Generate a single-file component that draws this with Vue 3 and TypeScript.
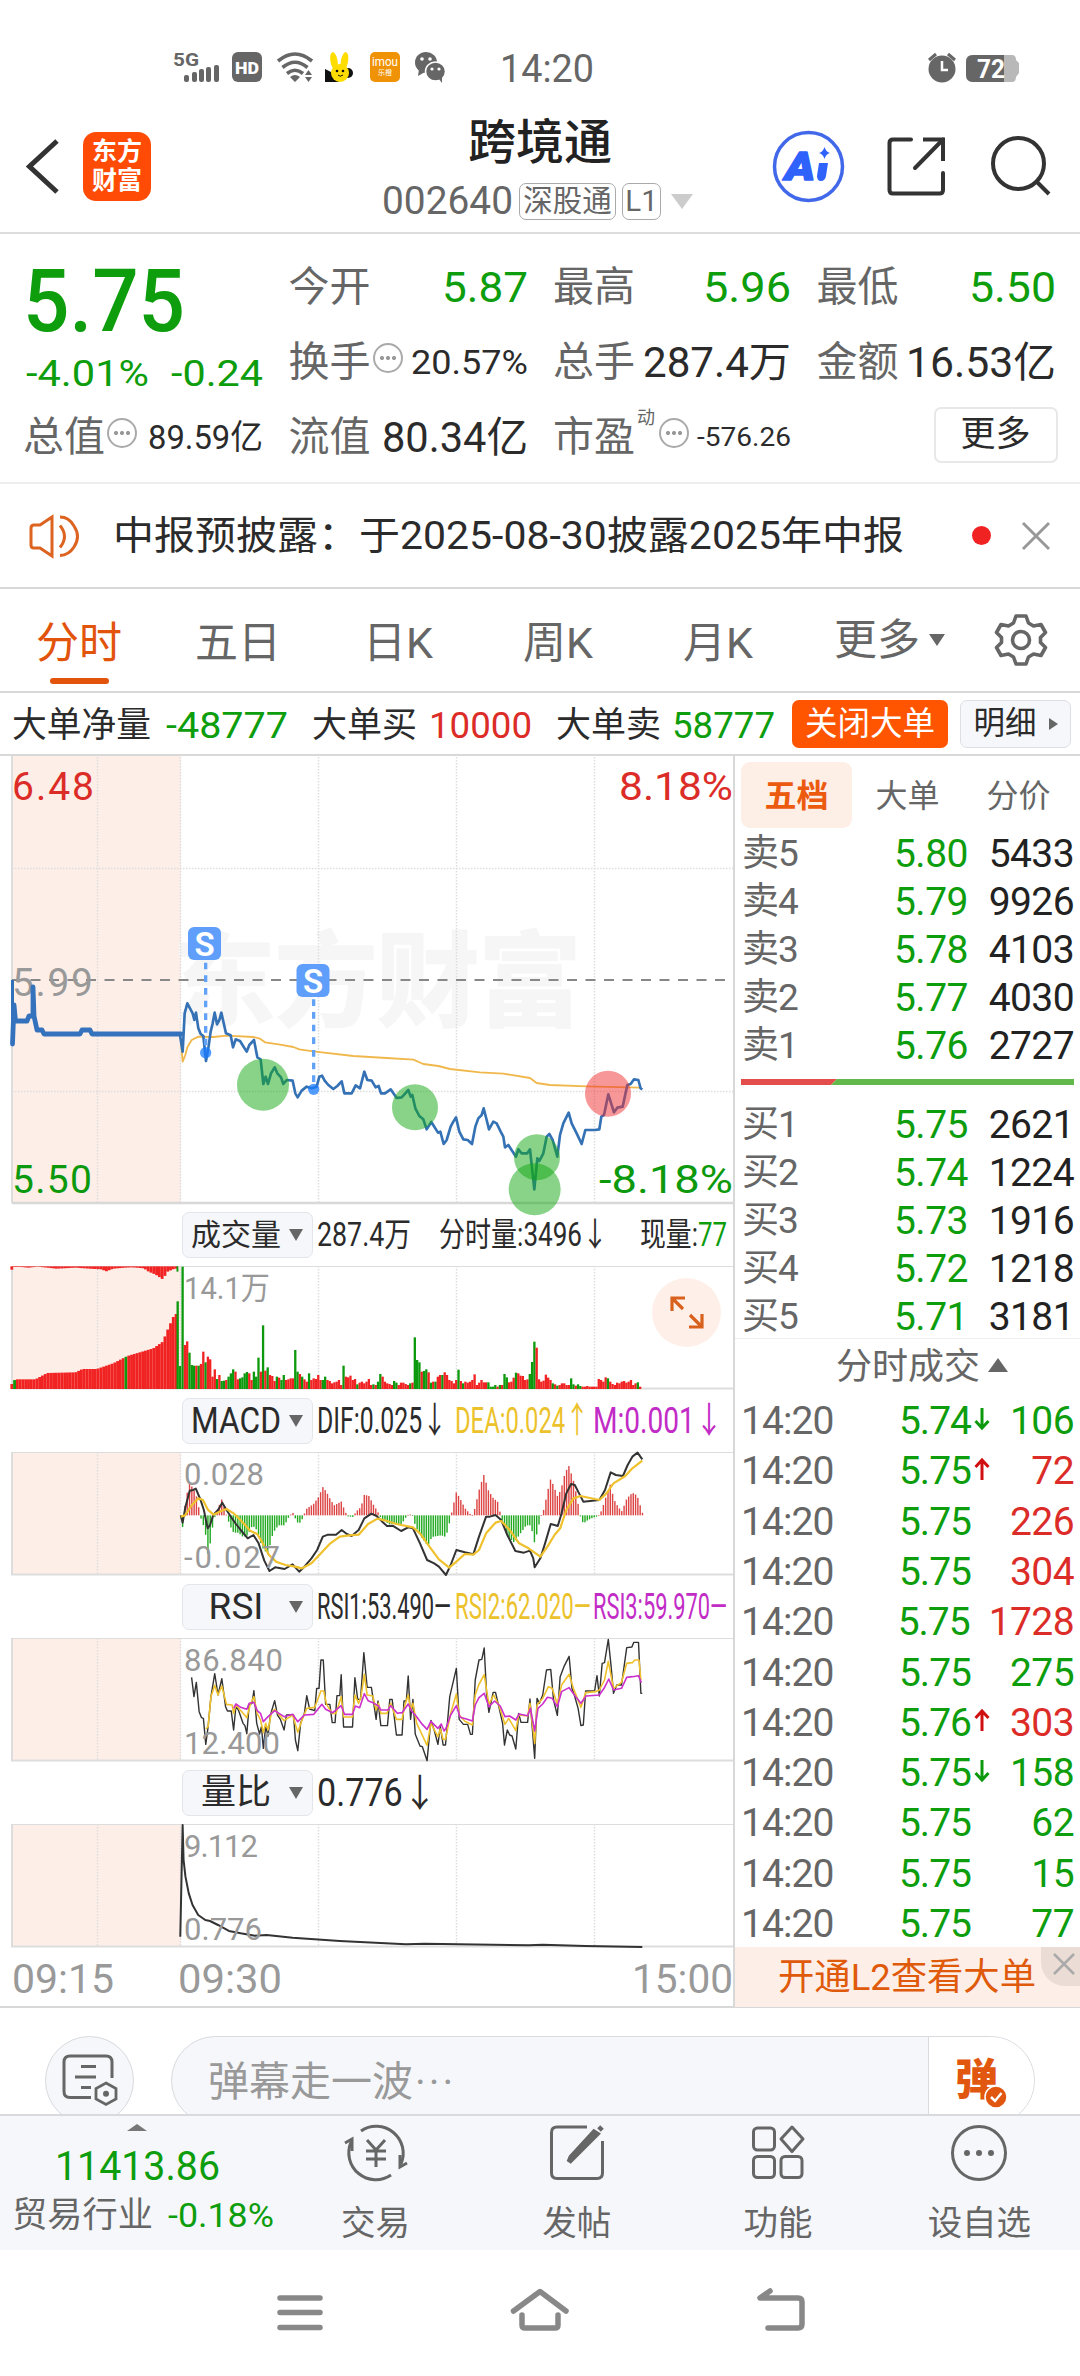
<script setup lang="ts">
import type { Directive } from 'vue'

// Squeezes or stretches a label horizontally so it occupies the given width.
const vFit: Directive<HTMLElement, number> = {
  mounted(el, { value }) {
    const natural = el.getBoundingClientRect().width
    el.style.transform = `scaleX(${value / natural})`
    el.style.marginRight = `${value - natural}px`
  },
}

interface Level { name: string; price: string; vol: string }
const asks: Level[] = [
  { name: '卖5', price: '5.80', vol: '5433' },
  { name: '卖4', price: '5.79', vol: '9926' },
  { name: '卖3', price: '5.78', vol: '4103' },
  { name: '卖2', price: '5.77', vol: '4030' },
  { name: '卖1', price: '5.76', vol: '2727' },
]
const bids: Level[] = [
  { name: '买1', price: '5.75', vol: '2621' },
  { name: '买2', price: '5.74', vol: '1224' },
  { name: '买3', price: '5.73', vol: '1916' },
  { name: '买4', price: '5.72', vol: '1218' },
  { name: '买5', price: '5.71', vol: '3181' },
]

interface Tick { price: string; dir?: 'up' | 'down'; vol: string; tone: 'red' | 'green' }
const ticks: Tick[] = [
  { price: '5.74', dir: 'down', vol: '106', tone: 'green' },
  { price: '5.75', dir: 'up', vol: '72', tone: 'red' },
  { price: '5.75', vol: '226', tone: 'red' },
  { price: '5.75', vol: '304', tone: 'red' },
  { price: '5.75', vol: '1728', tone: 'red' },
  { price: '5.75', vol: '275', tone: 'green' },
  { price: '5.76', dir: 'up', vol: '303', tone: 'red' },
  { price: '5.75', dir: 'down', vol: '158', tone: 'green' },
  { price: '5.75', vol: '62', tone: 'green' },
  { price: '5.75', vol: '15', tone: 'green' },
  { price: '5.75', vol: '77', tone: 'green' },
]

const gridX = [97.5, 180.5, 318.5, 456.5, 594.5]

const price =
  '0,225 8,275 14,160 22,130 30,145 38,160 43,180 48,158 55,205 62,222 70,228 78,303 85,265 92,215 98,190 104,158 111,193 118,180 124,158 138,220 152,226 159,262 167,238 180,243 200,275 208,255 222,240 232,292 242,298 250,372 257,350 264,372 273,340 284,322 292,340 303,352 310,372 320,360 338,362 346,400 353,412 365,392 380,380 395,385 410,380 418,350 426,347 434,362 445,375 460,387 472,378 485,364 493,400 515,400 527,376 540,385 553,335 562,360 575,362 587,382 596,378 603,400 615,400 632,388 650,414 665,412 685,390 692,410 697,405 706,445 718,468 730,478 740,508 754,486 774,518 781,515 791,552 800,540 812,500 820,485 828,472 838,515 850,538 863,540 876,552 886,500 895,475 905,465 911,445 920,480 927,508 940,485 950,490 962,515 970,530 975,562 985,555 1008,590 1015,568 1025,580 1042,580 1050,568 1063,688 1072,595 1078,603 1090,580 1100,530 1108,522 1118,540 1132,590 1140,525 1150,490 1166,458 1175,490 1190,520 1205,552 1216,510 1245,510 1258,508 1264,470 1272,465 1285,403 1302,457 1312,443 1328,440 1342,375 1352,372 1362,358 1375,360 1382,385 1387,388'
const average =
  '2,235 8,305 16,285 22,262 35,240 55,230 100,231 140,227 220,231 240,236 255,247 300,254 340,261 358,268 400,274 520,288 620,294 700,299 730,312 775,318 810,327 900,337 970,341 1050,354 1070,369 1110,375 1220,379 1380,383'

const dif =
  '383,376 387,398 393,350 402,302 409,300 415,296 425,330 432,360 440,415 445,405 452,375 462,360 471,338 480,360 490,382 500,402 510,420 525,445 537,435 548,460 560,512 571,543 583,532 603,537 620,523 634,545 645,530 660,505 672,480 684,440 695,434 712,434 724,420 735,432 745,438 760,420 772,385 787,371 798,378 810,395 820,408 832,407 850,423 865,412 875,415 890,460 905,510 920,520 930,530 945,555 955,525 967,480 985,487 1003,493 1015,440 1030,380 1038,380 1050,375 1062,390 1075,435 1092,483 1110,488 1123,482 1130,505 1133,532 1145,505 1155,460 1167,402 1175,405 1182,408 1190,370 1200,310 1210,282 1218,285 1227,310 1236,335 1270,330 1282,300 1294,247 1305,255 1320,258 1330,225 1340,200 1351,188 1361,208'
const dea =
  '383,380 392,376 405,348 420,325 430,330 440,358 452,374 470,362 480,357 495,370 515,398 530,422 545,432 555,455 570,495 585,515 605,525 625,530 640,535 660,520 680,490 700,460 720,440 740,436 760,434 780,402 800,386 820,393 840,402 875,412 890,430 910,470 930,508 952,533 967,515 985,492 1003,494 1015,480 1030,430 1050,398 1062,393 1080,420 1100,460 1120,475 1145,500 1160,470 1175,435 1187,415 1200,360 1215,325 1230,318 1270,330 1285,310 1300,280 1325,258 1340,235 1361,212'

const rsi1 =
  '406,292 411,350 416,307 422,395 427,413 431,415 436,493 441,440 447,350 455,281 462,345 470,296 478,380 482,393 490,393 495,450 500,378 506,393 515,430 519,437 523,461 528,375 534,370 538,332 544,430 550,462 554,440 558,505 563,440 568,468 573,405 582,362 588,405 594,418 602,450 607,405 622,405 626,480 631,512 637,430 645,400 650,347 656,387 667,392 671,325 676,325 680,240 685,240 690,373 699,373 704,428 710,428 714,347 720,347 723,284 728,441 747,441 752,293 758,358 764,358 771,218 778,322 787,322 797,418 801,363 807,437 821,437 826,358 831,358 840,465 852,465 856,363 861,363 865,288 870,418 875,358 880,463 890,498 895,500 905,542 913,421 920,450 928,493 933,440 939,495 944,495 953,350 967,265 973,418 982,433 991,433 997,463 1001,463 1007,300 1015,240 1021,238 1026,204 1031,340 1036,397 1045,337 1050,337 1057,380 1065,430 1069,495 1075,450 1080,465 1085,468 1093,507 1099,400 1104,427 1118,427 1123,357 1133,535 1138,355 1143,370 1150,345 1158,270 1167,268 1173,360 1181,406 1187,290 1195,260 1206,229 1212,325 1217,345 1225,385 1231,437 1236,435 1241,333 1260,333 1265,287 1270,348 1276,250 1281,248 1289,178 1295,260 1300,340 1307,315 1317,315 1328,203 1339,201 1343,187 1353,187 1358,340 1361,340'
const rsi2 =
  '436,447 441,440 447,350 455,316 462,345 470,318 480,373 492,375 495,400 500,375 515,400 523,413 530,375 538,350 545,400 552,420 558,458 563,430 568,450 575,400 582,388 602,422 620,405 631,457 640,420 650,385 667,382 680,333 686,333 692,373 704,400 712,400 723,350 728,411 747,411 752,345 760,370 765,350 772,283 778,345 790,348 797,390 802,370 807,400 820,400 828,370 840,418 852,418 858,375 865,345 870,390 875,370 883,430 893,460 905,496 913,430 928,470 933,447 939,478 944,478 955,400 967,342 973,405 985,424 1001,435 1007,345 1015,313 1026,284 1036,373 1046,345 1057,375 1070,433 1078,415 1093,452 1099,405 1118,408 1123,370 1133,490 1138,375 1150,355 1162,320 1170,325 1181,373 1190,315 1206,283 1215,325 1231,382 1241,338 1262,335 1270,330 1281,300 1289,244 1300,325 1317,307 1328,250 1340,248 1345,240 1354,240 1358,300'
const rsi3 =
  '495,385 500,372 510,382 523,388 528,370 538,367 545,392 552,400 558,425 568,410 582,392 602,410 620,403 631,425 645,405 665,403 682,373 690,388 705,398 723,377 730,403 747,403 753,378 762,383 772,341 780,362 790,368 802,378 807,390 822,390 828,377 842,400 852,398 865,372 872,393 880,405 893,430 905,448 913,424 928,445 935,432 941,453 945,445 955,405 967,377 975,412 990,418 1001,423 1007,375 1015,353 1026,340 1036,380 1048,363 1060,378 1070,410 1080,408 1093,420 1100,402 1118,407 1124,385 1133,453 1140,385 1150,372 1160,352 1170,355 1181,380 1190,335 1206,323 1220,350 1231,370 1242,348 1270,345 1280,325 1290,297 1300,330 1317,325 1328,292 1340,290 1353,287 1359,308'
const ratio =
  '382,530 387,195 389,300 393,350 400,400 408,435 420,465 435,480 445,483 462,495 485,513 510,520 540,527 565,525 620,533 720,543 860,553 900,551 1120,556 1150,554 1240,558 1361,561'

function lerp(keys: number[][], x: number): number {
  for (let i = 1; i < keys.length; i++) {
    const [x0, y0] = keys[i - 1]
    const [x1, y1] = keys[i]
    if (x <= x1) return y0 + ((y1 - y0) * (x - x0)) / (x1 - x0)
  }
  return keys[keys.length - 1][1]
}

interface Bar { x: number; y: number; w: number; h: number; c: string }
const RED = '#f02222'
const GREEN = '#0d990d'
const STEP = 4.872

// Minute volume after the open: colour letter + bar height.
const volumes =
  'g367 r132 r143 g109 g72 g70 r70 g70 r75 r112 g80 r97 r89 r37 r59 g30 r42 g24 g25 r27 g37 g47 g59 r52 r29 g32 g35 g47 g51 r47 r27 g52 g37 g94 r52 g191 r55 g65 r42 r39 r24 g37 r34 g27 g42 r27 r29 r32 r32 g117 g52 r45 g37 r29 r22 g47 r27 r32 r30 r42 r27 g27 g37 r27 r24 r17 r20 r22 r27 r12 g70 r37 r35 r40 r27 r30 g14 r19 r22 r17 r22 r30 r12 g14 r12 g22 g45 r37 r22 r17 r15 r12 g24 g19 r12 r19 r19 r15 r12 g17 r19 g155 g87 g80 r52 g54 g59 r50 g19 r22 g22 r37 r42 g42 r50 r42 r27 r24 r17 r27 g58 r24 g17 r22 r19 r22 r27 r44 r12 r19 r27 r20 r20 g20 g7 g7 g12 r7 g12 r12 g45 g35 r20 r22 r34 g49 r47 r40 r39 r27 r29 g45 g81 g142 r124 r29 r22 r25 r43 r34 r27 g17 r14 g10 r12 r17 r17 r12 r12 g32 g14 r10 g14 g9 r7 r7 r9 r7 r7 r7 r7 r30 r27 r22 r35 g32 r22 r15 r12 r19 r17 r22 r24 r19 r22 r27 r12 r17 g20 r7'
const preTop = [[25, 552], [32, 538], [75, 538], [100, 519], [160, 517], [175, 507], [205, 507], [240, 490], [270, 468], [325, 445], [345, 425], [355, 390], [370, 342]]
const preHang = [[25, 209], [30, 201], [45, 201], [60, 203], [80, 200], [120, 206], [160, 203], [190, 206], [215, 208], [225, 214], [240, 206], [265, 203], [280, 202], [305, 205], [315, 215], [330, 224], [345, 238], [355, 215], [370, 206]]

const volumeBars: Bar[] = []
for (let x = 25; x < 374; x += 5.9) {
  const y = lerp(preTop, x)
  const odd = (x > 27 && x < 32) || (x > 266 && x < 272)
  volumeBars.push({ x: x - 3, y, w: 6, h: 567 - y, c: odd ? GREEN : RED })
  volumeBars.push({ x: x - 3, y: 199, w: 6, h: lerp(preHang, x) - 199, c: RED })
}
volumeBars.push({ x: 374, y: 199, w: 4, h: 16, c: GREEN }, { x: 374, y: 304, w: 5, h: 263, c: GREEN }, { x: 379, y: 498, w: 5, h: 69, c: GREEN })
volumes.split(' ').forEach((t, i) => {
  const h = Number(t.slice(1))
  volumeBars.push({ x: 384.5 + i * STEP, y: 567 - h, w: 4.9, h, c: t[0] === 'g' ? GREEN : RED })
})

const macdKeys = [[387, -35], [392, 30], [397, 70], [402, 100], [407, 85], [415, 65], [421, 25], [426, -10], [431, -30], [436, -60], [441, -120], [446, -80], [451, -30], [456, 0], [460, 15], [470, 48], [480, 0], [487, -30], [495, -52], [505, -52], [515, -65], [525, -60], [535, -30], [545, -45], [555, -95], [568, -118], [575, -70], [580, -50], [590, -30], [603, -30], [612, -5], [620, 10], [626, -10], [632, -25], [638, -20], [645, 5], [650, 20], [665, 35], [675, 55], [684, 85], [692, 70], [700, 48], [708, 30], [715, 35], [724, 42], [730, 15], [737, -3], [748, -5], [755, 12], [765, 25], [772, 62], [782, 58], [790, 35], [800, 12], [806, -5], [818, -20], [825, -27], [835, -25], [850, -30], [858, -10], [866, 4], [874, 0], [880, -30], [890, -60], [907, -92], [915, -65], [935, -60], [945, -65], [952, -25], [958, 15], [967, 70], [975, 50], [985, 22], [1000, -2], [1006, 20], [1015, 75], [1025, 122], [1035, 75], [1045, 52], [1055, 40], [1061, 0], [1067, -25], [1077, -65], [1090, -82], [1100, -60], [1115, -30], [1125, -30], [1133, -85], [1140, -40], [1147, 0], [1153, 20], [1160, 70], [1167, 110], [1174, 85], [1182, 55], [1190, 85], [1197, 125], [1205, 150], [1215, 105], [1222, 60], [1229, 0], [1236, -25], [1245, -15], [1255, -8], [1268, -2], [1275, 15], [1285, 60], [1294, 95], [1300, 50], [1310, 25], [1318, 12], [1328, 50], [1340, 68], [1350, 60], [1362, 5]]
const macdBars: Bar[] = []
for (let i = 0; i <= 200; i++) {
  const x = 387 + i * STEP
  const v = lerp(macdKeys, x)
  macdBars.push({ x: x - 1.5, y: v > 0 ? 376 - v : 376, w: 3, h: Math.max(Math.abs(v), 2), c: v > 0 ? '#dd4444' : '#22aa22' })
}
</script>

<template>
  <div class="screen">
    <header class="status">
      <svg class="status-left" width="280" height="40" viewBox="170 46 280 40">
        <text x="173" y="66" font-size="18" font-weight="700" textLength="26" lengthAdjust="spacingAndGlyphs" fill="#666">5G</text>
        <g fill="#666">
          <rect x="184" y="75" width="5" height="7" rx="2" /><rect x="192" y="72" width="5" height="10" rx="2" />
          <rect x="199" y="69" width="5" height="13" rx="2" /><rect x="206" y="67" width="5" height="15" rx="2" />
          <rect x="214" y="65" width="5" height="17" rx="2" />
          <rect x="232" y="52" width="30" height="30" rx="6" />
        </g>
        <text x="235" y="73.500" font-size="17" font-weight="900" textLength="24" lengthAdjust="spacingAndGlyphs" fill="#fff">HD</text>
        <g fill="none" stroke="#666" stroke-width="3.600">
          <path d="M278 61 Q295 47 312 61" /><path d="M282.500 67.500 Q295 57 307.500 67.500" /><path d="M287 73.500 Q295 67 303 73.500" />
        </g>
        <path d="M290 77 Q295 73 300 77 L295 82Z M305 75 l3.500 -5 l3.500 5z M305 77 l3.500 5 l3.500 -5z" fill="#666" />
        <ellipse cx="334" cy="61" rx="3.600" ry="9" fill="#fd0" transform="rotate(-10 334 61)" />
        <ellipse cx="344.500" cy="61" rx="3.600" ry="9" fill="#fd0" transform="rotate(10 344.500 61)" />
        <path d="M325 69 l6 3 l8 10 h-14z" fill="#111" />
        <circle cx="348" cy="73" r="5" fill="#111" />
        <circle cx="340" cy="73" r="9" fill="#fd0" />
        <circle cx="337" cy="71" r="1.300" fill="#111" /><circle cx="343" cy="71" r="1.300" fill="#111" /><path d="M338 75 q2 2.500 5 0" stroke="#111" fill="none" />
        <rect x="370" y="52" width="30" height="30" rx="5" fill="#f09205" />
        <text x="372" y="66" font-size="12" textLength="26" lengthAdjust="spacingAndGlyphs" fill="#fff">imou</text>
        <text x="378" y="75" font-size="7" textLength="14" fill="#fff">乐橙</text>
        <ellipse cx="426" cy="62.500" rx="11" ry="10.500" fill="#666" /><path d="M419 69 l-1 7 l7 -4z" fill="#666" />
        <ellipse cx="435.500" cy="71.500" rx="10" ry="9.500" fill="#666" stroke="#fff" stroke-width="1.500" /><path d="M439 79 l3 4 l0 -6z" fill="#666" />
        <g fill="#fff"><circle cx="422" cy="59" r="1.800" /><circle cx="430" cy="59" r="1.800" /><circle cx="432" cy="69" r="1.600" /><circle cx="439" cy="69" r="1.600" /></g>
      </svg>
      <span v-fit="94" class="fit clock">14:20</span>
      <svg class="status-right" width="96" height="34" viewBox="926 50 96 34">
        <circle cx="942" cy="69" r="13.500" fill="#666" /><path d="M942 61 v9 h6" fill="none" stroke="#fff" stroke-width="2.500" />
        <path d="M929 60 l7 -6 M948 54 l7 6" stroke="#666" stroke-width="3" />
        <path d="M973 55 h39 q4 0 4 5 l3 3 v10 l-3 4 q0 5 -4 5 h-39 q-7 0 -7 -7 v-13 q0 -7 7 -7z" fill="#b8b8b8" />
        <path d="M973 55 h31 v27 h-31 q-7 0 -7 -7 v-13 q0 -7 7 -7z" fill="#666" />
        <text x="977" y="78" font-size="25" font-weight="700" textLength="28" lengthAdjust="spacingAndGlyphs" fill="#fff">72</text>
      </svg>
    </header>

    <nav class="titlebar">
      <svg class="back" width="34" height="58" viewBox="26 138 34 58"><path d="M57 141 L29.500 166.500 L57 192" fill="none" stroke="#333" stroke-width="5" /></svg>
      <div class="logo"><span>东方</span><span>财富</span></div>
      <div class="heading">
        <h1>跨境通</h1>
        <div class="codes">
          <span v-fit="131" class="fit">002640</span>
          <span class="tag t1">深股通</span><span class="tag t2">L1</span>
          <i class="caret"></i>
        </div>
      </div>
      <svg class="actions" width="290" height="76" viewBox="770 128 290 76">
        <circle cx="808.500" cy="166.500" r="34" fill="none" stroke="#4268ea" stroke-width="3.500" />
        <text x="785" y="180" font-size="38" font-weight="900" font-style="italic" textLength="30" lengthAdjust="spacingAndGlyphs" fill="#2f62fb" stroke="#2f62fb" stroke-width="1.500" stroke-linejoin="round">A</text>
        <path d="M819 163 h9 l-2 13 q-1 5 -5 5 t-4 -5z" fill="#2f62fb" />
        <path d="M824.500 147 q1.500 5 5.500 6 q-4 1 -5.500 6 q-1.500 -5 -5.500 -6 q4 -1 5.500 -6z" fill="#2f62fb" />
        <g fill="none" stroke="#333" stroke-width="4">
          <path d="M911 139.500 H893 q-3.500 0 -3.500 3.500 V190 q0 3.500 3.500 3.500 H939.500 q3.500 0 3.500 -3.500 V173" stroke-linecap="round" />
          <path d="M923 139.500 H943 V161" /><path d="M943 139.500 L915 168" stroke-linecap="round" />
          <circle cx="1018.500" cy="163.500" r="25.500" /><path d="M1036 181 L1049 194" />
        </g>
      </svg>
    </nav>

    <section class="quote">
      <div class="last">
        <b v-fit="162" class="fit green">5.75</b>
        <p class="green"><span v-fit="123" class="fit">-4.01%</span><span v-fit="92" class="fit">-0.24</span></p>
      </div>
      <div class="cell"><label>今开</label><span v-fit="86" class="fit green">5.87</span></div>
      <div class="cell"><label>最高</label><span v-fit="88" class="fit green">5.96</span></div>
      <div class="cell"><label>最低</label><span v-fit="87" class="fit green">5.50</span></div>
      <div class="cell"><label>换手</label><i class="more"></i><span v-fit="117" class="fit s">20.57%</span></div>
      <div class="cell"><label>总手</label><span v-fit="148" class="fit">287.4万</span></div>
      <div class="cell"><label>金额</label><span v-fit="150" class="fit">16.53亿</span></div>
      <div class="cell"><label class="first">总值</label><i class="more"></i><span v-fit="115" class="fit s">89.59亿</span></div>
      <div class="cell"><label>流值</label><span v-fit="146" class="fit">80.34亿</span></div>
      <div class="cell"><label>市盈</label><sup>动</sup><i class="more"></i><span v-fit="94" class="fit xs">-576.26</span></div>
      <div class="cell end"><button class="more-btn">更多</button></div>
    </section>

    <section class="notice">
      <svg width="52" height="46" viewBox="29 512 52 46" fill="none" stroke="#dc6420" stroke-width="3">
        <path d="M52 516 L40 524 H34 q-3 0 -3 3 v17 q0 3 3 3 h6 L52 555Z" /><path d="M60 524.500 q9 11 0 22 M60 516 q9 0 14 9 q7 10.500 0 21 q-5 8 -14 8.500" />
      </svg>
      <span v-fit="791" class="fit msg">中报预披露：于2025-08-30披露2025年中报</span>
      <i class="dot"></i>
      <svg width="30" height="30" viewBox="0 0 30 30"><path d="M2 2 L28 28 M28 2 L2 28" stroke="#999" stroke-width="3" /></svg>
    </section>

    <nav class="tabs">
      <span class="tab on">分时</span><span class="tab">五日</span>
      <span class="tab">日K</span><span class="tab">周K</span><span class="tab">月K</span>
      <span class="tab wide">更多<i></i></span>
      <svg width="54" height="56" viewBox="-27 -28 54 56" fill="none" stroke="#666" stroke-width="3.600" stroke-linejoin="round">
        <path d="M-5 -24 H5 L7.500 -17 L12.500 -14 L20 -15.500 L24.500 -7.500 L19.500 -2.500 V2.500 L24.500 7.500 L20 15.500 L12.500 14 L7.500 17 L5 24 H-5 L-7.500 17 L-12.500 14 L-20 15.500 L-24.500 7.500 L-19.500 2.500 V-2.500 L-24.500 -7.500 L-20 -15.500 L-12.500 -14 L-7.500 -17Z" /><circle r="8.500" />
      </svg>
    </nav>

    <section class="flow">
      <span v-fit="139" class="fit">大单净量</span><span v-fit="122" class="fit green n1">-48777</span>
      <span v-fit="105" class="fit n2">大单买</span><span v-fit="103" class="fit red n3">10000</span>
      <span v-fit="105" class="fit n4">大单卖</span><span v-fit="103" class="fit green n5">58777</span>
      <button class="close-big">关闭大单</button><button class="detail">明细<i></i></button>
    </section>

    <main class="body">
      <section class="charts">
        <svg class="pane" width="734" height="448" viewBox="0 756 734 448">
          <rect x="12" y="756" width="169" height="447" fill="#fdeee7" />
          <text x="172" y="1019" font-size="104" font-weight="900" textLength="410" fill="#f6f6f6">东方财富</text>
          <g stroke="#ddd" stroke-width="1.500" stroke-dasharray="1.500 1.500">
            <path v-for="x in gridX" :key="x" :d="`M${x} 757 V1203`" /><path d="M12 868.500 H733 M12 1091.500 H733" />
          </g>
          <path d="M12 756 V1203" stroke="#ddd" stroke-width="2" /><path d="M12 1203 H733" stroke="#d8d8d8" stroke-width="2.500" />
          <path d="M12 980 H733" stroke="#888" stroke-width="2" stroke-dasharray="10 8.500" />
          <g font-size="39">
            <text x="12" y="799.500" textLength="82" fill="#dc2c28">6.48</text><text x="619" y="799.500" textLength="114" lengthAdjust="spacingAndGlyphs" fill="#dc2c28">8.18%</text>
            <text x="12" y="996" textLength="81" fill="#999">5.99</text>
            <text x="12" y="1193" textLength="80" fill="#0d990d">5.50</text><text x="599" y="1193" textLength="134" lengthAdjust="spacingAndGlyphs" fill="#0d990d">-8.18%</text>
          </g>
          <path d="M12.500 1044 V980" stroke="#2f70b8" stroke-width="3" />
          <path d="M12.500 1044 L14 1005 L15.500 1021 H27 L29 1016 H33 L33 987 L34 1016 L37 1030 H42 L44 1034 H80 L82 1030 H90 L92 1034 H181" fill="none" stroke="#3572bd" stroke-width="4.800" stroke-linejoin="round" stroke-linecap="round" />
          <g transform="translate(180 960) scale(0.33333)" fill="none" stroke-linejoin="round">
            <polyline :points="average" stroke="#f0b84c" stroke-width="5.500" />
            <polyline :points="price" stroke="#3572b5" stroke-width="8" />
            <g stroke="#62a3f8" stroke-width="10" stroke-dasharray="20 18"><path d="M77 8 V270" /><path d="M401 118 V380" /></g>
            <g fill="#1a7cff" fill-opacity="0.750"><circle cx="77" cy="278" r="17" /><circle cx="401" cy="388" r="17" /></g>
            <g fill="#11a811" fill-opacity="0.500">
              <circle cx="249" cy="374" r="78" /><circle cx="705" cy="442" r="69" /><circle cx="1071" cy="592" r="69" /><circle cx="1064" cy="688" r="78" />
            </g>
            <circle cx="1284" cy="401" r="69" fill="#f03030" fill-opacity="0.500" />
          </g>
          <rect x="188" y="927" width="33" height="33" rx="6" fill="#5f9ffb" /><rect x="296.500" y="964" width="33" height="33" rx="6" fill="#5f9ffb" />
          <g font-size="33" font-weight="600" fill="#fff" text-anchor="middle"><text x="204.500" y="956">S</text><text x="313" y="993">S</text></g>
        </svg>

        <div class="ind lead">
          <span class="pick">成交量<i></i></span>
          <span v-fit="94" class="fit">287.4万</span><span v-fit="169" class="fit g1">分时量:3496↓</span><span v-fit="87" class="fit g2">现量:<em class="green">77</em></span>
        </div>
        <svg class="pane" width="734" height="123" viewBox="0 1266 734 123">
          <rect x="12" y="1266" width="169" height="123" fill="#fdeee7" />
          <path v-for="x in gridX" :key="x" :d="`M${x} 1266 V1389`" stroke="#ddd" stroke-width="1.500" stroke-dasharray="1.500 1.500" />
          <path d="M12 1266.500 H733" stroke="#ddd" /><path d="M12 1266 V1388.500 H733" fill="none" stroke="#ddd" stroke-width="2" />
          <g transform="translate(0 1200) scale(0.47192 0.33333)">
            <rect v-for="(b, i) in volumeBars" :key="i" :x="b.x" :y="b.y" :width="b.w" :height="b.h" :fill="b.c" />
          </g>
          <text x="184" y="1299" font-size="32" textLength="86" lengthAdjust="spacingAndGlyphs" fill="#999">14.1万</text>
          <circle cx="686.500" cy="1312.500" r="34.500" fill="#fef0e8" />
          <path d="M672 1311 V1298 H685 M672 1298 L683 1309 M702 1314 V1327 H689 M702 1327 L690 1315" fill="none" stroke="#d9611e" stroke-width="3.200" />
        </svg>

        <div class="ind">
          <span class="pick latin"><span v-fit="90" class="fit">MACD</span><i></i></span>
          <span class="lg"><span v-fit="130" class="fit">DIF:0.025↓</span></span><span class="lg yel"><span v-fit="134" class="fit">DEA:0.024↑</span></span><span class="lg mag"><span v-fit="130" class="fit">M:0.001↓</span></span>
        </div>
        <svg class="pane" width="734" height="123" viewBox="0 1452 734 123">
          <rect x="12" y="1452" width="169" height="123" fill="#fdeee7" />
          <path v-for="x in gridX" :key="x" :d="`M${x} 1452 V1575`" stroke="#ddd" stroke-width="1.500" stroke-dasharray="1.500 1.500" />
          <path d="M12 1452.500 H733" stroke="#ddd" /><path d="M12 1452 V1574.500 H733" fill="none" stroke="#ddd" stroke-width="2" />
          <g transform="translate(0 1390) scale(0.47192 0.33333)">
            <rect v-for="(b, i) in macdBars" :key="i" :x="b.x" :y="b.y" :width="b.w" :height="b.h" :fill="b.c" />
            <polyline class="ln" :points="dif" stroke="#333" stroke-width="2" /><polyline class="ln" :points="dea" stroke="#efc12c" stroke-width="2.200" />
          </g>
          <g font-size="31" fill="#999"><text x="184" y="1485" textLength="80">0.028</text><text x="184" y="1568" textLength="96">-0.027</text></g>
        </svg>

        <div class="ind">
          <span class="pick latin">RSI<i></i></span>
          <span class="lg"><span v-fit="134" class="fit">RSI1:53.490—</span></span><span class="lg yel"><span v-fit="136" class="fit">RSI2:62.020—</span></span><span class="lg mag"><span v-fit="134" class="fit">RSI3:59.970—</span></span>
        </div>
        <svg class="pane" width="734" height="123" viewBox="0 1638 734 123">
          <rect x="12" y="1638" width="169" height="123" fill="#fdeee7" />
          <path v-for="x in gridX" :key="x" :d="`M${x} 1638 V1761`" stroke="#ddd" stroke-width="1.500" stroke-dasharray="1.500 1.500" />
          <path d="M12 1638.500 H733" stroke="#ddd" /><path d="M12 1638 V1760.500 H733" fill="none" stroke="#ddd" stroke-width="2" />
          <g transform="translate(0 1580) scale(0.47192 0.33333)">
            <polyline class="ln" :points="rsi1" stroke="#333" stroke-width="1.400" /><polyline class="ln" :points="rsi2" stroke="#efc12c" stroke-width="1.600" /><polyline class="ln" :points="rsi3" stroke="#cc30cc" stroke-width="1.600" />
          </g>
          <g font-size="31" fill="#999"><text x="184" y="1671" textLength="99">86.840</text><text x="184" y="1754" textLength="96">12.400</text></g>
        </svg>

        <div class="ind">
          <span class="pick two">量比<i></i></span>
          <span v-fit="120" class="fit big">0.776↓</span>
        </div>
        <svg class="pane" width="734" height="123" viewBox="0 1824 734 123">
          <rect x="12" y="1824" width="169" height="123" fill="#fdeee7" />
          <path v-for="x in gridX" :key="x" :d="`M${x} 1824 V1947`" stroke="#ddd" stroke-width="1.500" stroke-dasharray="1.500 1.500" />
          <path d="M12 1824.500 H733" stroke="#ddd" /><path d="M12 1824 V1946.500 H733" fill="none" stroke="#ddd" stroke-width="2" />
          <g transform="translate(0 1760) scale(0.47192 0.33333)"><polyline class="ln" :points="ratio" stroke="#333" stroke-width="2" /></g>
          <g font-size="31" fill="#999"><text x="184" y="1857" textLength="74">9.112</text><text x="184" y="1940" textLength="78">0.776</text></g>
        </svg>
        <div class="axis"><span v-fit="102" class="fit">09:15</span><span v-fit="104" class="fit mid">09:30</span><span v-fit="101" class="fit">15:00</span></div>
      </section>

      <aside class="book">
        <div class="book-tabs"><span class="on">五档</span><span>大单</span><span>分价</span></div>
        <div v-for="r in asks" :key="r.name" class="lv"><label>{{ r.name }}</label><span class="green">{{ r.price }}</span><b>{{ r.vol }}</b></div>
        <svg class="balance" width="333" height="6" viewBox="0 0 333 6"><path d="M0 0 H96 L90 6 H0Z" fill="#e34d4b" /><path d="M96 0 H333 V6 H90Z" fill="#62b84a" /></svg>
        <div v-for="r in bids" :key="r.name" class="lv"><label>{{ r.name }}</label><span class="green">{{ r.price }}</span><b>{{ r.vol }}</b></div>
        <div class="ticks-head">分时成交<i></i></div>
        <div v-for="(t, i) in ticks" :key="i" class="tick">
          <label>14:20</label><span class="green">{{ t.price }}</span>
          <svg width="16" height="24" viewBox="0 0 16 24" fill="none" stroke-width="3">
            <path v-if="t.dir === 'down'" d="M8 1 V21 M1.500 14 L8 21 L14.500 14" stroke="#0d990d" /><path v-if="t.dir === 'up'" d="M8 23 V3 M1.500 10 L8 3 L14.500 10" stroke="#d01010" />
          </svg>
          <b :class="t.tone">{{ t.vol }}</b>
        </div>
        <div class="promo">
          <span v-fit="258" class="fit">开通L2查看大单</span>
          <div class="promo-x"><svg width="22" height="22" viewBox="0 0 22 22"><path d="M1 1 L21 21 M21 1 L1 21" stroke="#aaa" stroke-width="2.500" /></svg></div>
        </div>
      </aside>
    </main>

    <section class="danmu">
      <div class="round">
        <svg width="56" height="54" viewBox="0 0 56 54" fill="none" stroke="#666" stroke-width="3">
          <path d="M29 43.500 H8 q-6 0 -6 -6 V8 q0 -6 6 -6 H44 q6 0 6 6 V24" /><path d="M19 12.500 H34 M13 23 H34 M19 33.500 H29" stroke-linecap="butt" />
          <path d="M44 29 L54 34.500 V45 L44 50.500 L34 45 V34.500Z" stroke-width="2.800" /><circle cx="44" cy="39.800" r="3" fill="#666" stroke="none" />
        </svg>
      </div>
      <div class="field">
        <span>弹幕走一波<em>···</em></span>
        <div class="send"><b>弹</b><svg width="24" height="24" viewBox="0 0 24 24"><circle cx="12" cy="12" r="11" fill="#e2570f" stroke="#fff" stroke-width="1.500" /><path d="M7 12 l4 4 l6.500 -8" fill="none" stroke="#fff" stroke-width="2.500" /></svg></div>
      </div>
    </section>

    <footer class="dock">
      <div class="sector">
        <i></i><span v-fit="165" class="fit idx green">11413.86</span>
        <p><span v-fit="141" class="fit">贸易行业</span><span v-fit="106" class="fit pc green">-0.18%</span></p>
      </div>
      <div class="item">
        <svg width="66" height="60" viewBox="-33 -30 66 60" fill="none" stroke="#666" stroke-width="3">
          <path d="M-15 -22 A27 27 0 0 1 25 11 M15 22 A27 27 0 0 1 -25 -11" /><path d="M31 9 L24 13 V1" transform="translate(0 1)" /><path d="M-31 -9 L-24 -13 V-1" transform="translate(0 -1)" />
          <path d="M-9 -13 L0 -3 L9 -13 M0 -3 V14 M-10 -2 H10 M-10 6 H10" />
        </svg><span>交易</span>
      </div>
      <div class="item">
        <svg width="66" height="60" viewBox="-33 -30 66 60" fill="none" stroke="#666" stroke-width="3">
          <path d="M10 -26 H-20 q-5.500 0 -5.500 5.500 V20 q0 5.500 5.500 5.500 H20 q5.500 0 5.500 -5.500 V-12" /><path d="M20 -19 L-4 5 L-8 9 L-6 4 L17 -21Z M22 -23 L25 -26" stroke-width="5" />
        </svg><span>发帖</span>
      </div>
      <div class="item">
        <svg width="66" height="60" viewBox="-33 -30 66 60" fill="none" stroke="#666" stroke-width="3">
          <rect x="-24.500" y="-25" width="21" height="22" rx="4" /><rect x="-24.500" y="3.500" width="21" height="21" rx="4" /><rect x="3" y="3.500" width="21" height="21" rx="4" /><path d="M14 -26 L25 -14 L14 -1.500 L3 -14Z" stroke-linejoin="round" />
        </svg><span>功能</span>
      </div>
      <div class="item">
        <svg width="66" height="60" viewBox="-33 -30 66 60" fill="none" stroke="#666" stroke-width="3">
          <circle r="26.500" /><g fill="#666" stroke="none"><circle cx="-12" r="3" /><circle r="3" /><circle cx="12" r="3" /></g>
        </svg><span>设自选</span>
      </div>
    </footer>

    <div class="sys">
      <svg width="536" height="50" viewBox="272 2285 536 50" fill="none" stroke="#888" stroke-width="5.500" stroke-linecap="round" stroke-linejoin="round">
        <path d="M280 2298 H320 M280 2312.500 H320 M280 2327.500 H320" />
        <path d="M513.500 2311 L540 2291.500 L566 2311" /><path d="M522 2315 V2325 q0 3 3 3 H555 q3 0 3 -3 V2315" />
        <path d="M770 2291 L760 2298 H798 q4 0 4 4 V2324 q0 4 -4 4 H768" />
      </svg>
    </div>
  </div>
</template>

<style>
body { margin: 0; }
</style>

<style scoped>
.screen { width: 1080px; height: 2376px; overflow: hidden; display: flex; flex-direction: column; background: #fff; color: #2b2b2b; font-family: Roboto, "Noto Sans CJK SC", sans-serif; }
.screen * { box-sizing: border-box; }
.screen > * { flex-shrink: 0; }
i, em { font-style: normal; }
p, h1 { margin: 0; }
b { font-weight: 400; }
button { font-family: inherit; padding: 0; }
svg { display: block; flex-shrink: 0; }
.fit { display: inline-block; white-space: nowrap; transform-origin: 0 50%; flex-shrink: 0; }
.green { color: #0d9d0d; }
.red { color: #dc2c28; }

.status { height: 110px; display: flex; align-items: flex-start; }
.status-left { margin: 46px 0 0 170px; }
.clock { margin-left: 50px; margin-top: 48px; font-size: 38px; line-height: 42px; color: #666; }
.status-right { margin: 50px 58px 0 auto; }

.titlebar { height: 124px; border-bottom: 2px solid #ddd; display: flex; align-items: flex-start; }
.back { margin: 28px 0 0 26px; }
.logo { margin: 22px 0 0 23px; width: 68px; height: 69px; border-radius: 13px; background: #ff4b05; color: #fff; font-size: 25px; font-weight: 700; line-height: 29px; padding-top: 5px; display: flex; flex-direction: column; align-items: center; }
.heading { margin-left: 231px; width: 316px; }
h1 { font-size: 48px; font-weight: 500; line-height: 60px; margin: 3px 0 0 86px; color: #222; white-space: nowrap; }
.codes { display: flex; align-items: center; height: 38px; margin-top: 9px; color: #666; font-size: 38px; line-height: 38px; }
.tag { height: 37px; border: 1.500px solid #aaa; border-radius: 7px; font-size: 29.500px; line-height: 34px; text-align: center; white-space: nowrap; flex-shrink: 0; }
.t1 { width: 97px; margin-left: 6px; }
.t2 { width: 39px; margin-left: 6px; }
.caret { margin-left: 10px; border: 11px solid transparent; border-top: 15px solid #ccc; border-bottom: 0; }
.actions { margin: 18px 0 0 72px; }

.quote { height: 250px; border-bottom: 2px solid #eee; padding: 15.500px 0 0 26px; display: grid; grid-template-columns: 237px 239px 238px 239px; column-gap: 25.500px; grid-template-rows: 75px 75px 75px; }
.last { grid-row: 1 / 3; padding-top: 13px; }
.last b { font-size: 88px; font-weight: 500; line-height: 75px; display: block; width: max-content; margin-left: -3px; }
.last p { display: flex; justify-content: space-between; font-size: 37px; line-height: 71px; }
.cell { display: flex; align-items: center; justify-content: flex-end; font-size: 42px; line-height: 75px; white-space: nowrap; }
.cell label { color: #666; font-size: 41px; margin-right: auto; }
.cell .s { font-size: 34px; margin-left: 7px; }
.cell .xs { font-size: 26px; margin-left: 8px; }
.cell:has(.more) label { margin-right: 2px; }
.cell label.first { margin-left: -3px; }
.more { width: 30px; height: 30px; border: 2px solid #aaa; border-radius: 50%; margin-right: auto; margin-bottom: 8px; flex-shrink: 0; background: radial-gradient(circle at 7px 13px, #999 1.800px, transparent 2.300px), radial-gradient(circle at 13px 13px, #999 1.800px, transparent 2.300px), radial-gradient(circle at 19px 13px, #999 1.800px, transparent 2.300px); }
sup { font-size: 18px; line-height: 20px; align-self: flex-start; margin-top: 8px; width: 22px; color: #666; }
.more-btn { width: 124px; height: 56px; border: 2px solid #e8e8e8; border-radius: 7px; background: #fff; font-size: 35px; line-height: 50px; color: #2b2b2b; position: relative; left: 2px; top: -2px; }

.notice { height: 105px; border-bottom: 2px solid #d8d8d8; display: flex; align-items: center; padding-left: 29px; font-size: 39px; line-height: 60px; }
.msg { margin-left: 32px; }
.dot { width: 19px; height: 19px; border-radius: 50%; background: #f02222; margin: 0 30px 0 68px; }

.tabs { height: 104px; border-bottom: 2px solid #d8d8d8; display: flex; align-items: center; font-size: 43px; color: #666; }
.tab { width: 160px; height: 102px; line-height: 108px; text-align: center; position: relative; white-space: nowrap; }
.tab:first-child { width: 158px; }
.tab.on { color: #e2530c; }
.tab.on::after { content: ''; position: absolute; left: 50px; top: 89px; width: 59px; height: 6px; border-radius: 3px; background: #e2530c; }
.tab.wide { width: 144px; margin-left: 3px; margin-right: 51px; display: flex; align-items: center; justify-content: flex-end; }
.tab i { border: 8px solid transparent; border-top: 12px solid #666; border-bottom: 0; margin-left: 9px; }
.tabs svg { margin-left: -2px; }

.flow { height: 63px; border-bottom: 2px solid #d8d8d8; display: flex; align-items: center; padding-left: 12px; font-size: 35px; line-height: 60px; white-space: nowrap; }
.flow > span { padding-top: 5px; }
.n1 { margin-left: 15px; font-size: 37px; }
.n2 { margin-left: 24px; }
.n3 { margin-left: 12px; font-size: 37px; }
.n4 { margin-left: 24px; }
.n5 { margin-left: 11px; font-size: 37px; }
.close-big { margin-left: auto; width: 156px; height: 48px; border: 0; border-radius: 7px; background: #ff5500; color: #fff; font-size: 32.500px; line-height: 46px; flex-shrink: 0; }
.detail { width: 111px; height: 48px; margin: 0 9px 0 12px; border: 1.500px solid #dcdfe4; border-radius: 7px; background: #f6f7fa; color: #2b2b2b; font-size: 31.500px; display: flex; align-items: center; justify-content: center; line-height: 44px; flex-shrink: 0; }
.detail i { border: 6px solid transparent; border-left: 9px solid #666; border-right: 0; margin-left: 12px; }

.body { height: 1252px; display: flex; border-bottom: 2px solid #d8d8d8; }
.charts { width: 735px; border-right: 2px solid #d8d8d8; }
.pane { position: relative; overflow: visible; z-index: 1; }
.ln { fill: none; vector-effect: non-scaling-stroke; stroke-linejoin: round; }
.ind { height: 63px; display: flex; align-items: center; padding-left: 182px; font-size: 33px; line-height: 46px; white-space: nowrap; }
.ind.lead { height: 62px; }
.pick { width: 131px; height: 46px; margin-right: 4px; border: 1.500px solid #e2e5ea; border-radius: 7px; background: #f6f7fa; display: flex; align-items: center; justify-content: center; font-size: 30px; line-height: 42px; padding-right: 23px; position: relative; flex-shrink: 0; }
.pick.latin { font-size: 37px; }
.pick.two { font-size: 35px; }
.pick i { position: absolute; left: 106px; top: 16px; border: 7.500px solid transparent; border-top: 12px solid #666; border-bottom: 0; }
.ind .g1 { margin-left: 28px; }
.ind .g2 { margin-left: 32px; }
.lg { width: 138px; flex-shrink: 0; font-size: 36px; }
.lg.yel { color: #ecc22c; }
.lg.mag { color: #c22cc6; }
.big { font-size: 38px; }
.axis { height: 61px; display: flex; align-items: center; padding: 4px 0 0 12px; font-size: 40px; color: #999; line-height: 50px; }
.axis .mid { margin-left: 64px; }
.axis .fit:last-child { margin-left: 350px; }

.book { width: 345px; }
.book-tabs { display: flex; height: 74px; padding: 6px 0 0 6px; font-size: 32px; color: #666; line-height: 68px; }
.book-tabs span { width: 111px; height: 66px; text-align: center; }
.book-tabs .on { background: #fdeee6; color: #ec5a10; border-radius: 9px; font-weight: 700; }
.lv { height: 48.100px; display: flex; align-items: center; padding: 0 6px 0 7px; font-size: 39px; line-height: 48px; color: #222; }
.lv label { width: 80px; color: #666; font-size: 37px; white-space: nowrap; letter-spacing: -1px; }
.lv span { width: 146px; text-align: right; letter-spacing: -0.500px; }
.lv b { flex: 1; text-align: right; letter-spacing: -0.600px; }
.balance { margin: 9px 0 15px 6px; }
.ticks-head { height: 58px; margin-top: -3px; border-top: 1.500px solid #eee; display: flex; align-items: center; padding-left: 101px; font-size: 36px; color: #666; line-height: 56px; }
.ticks-head i { border: 10.500px solid transparent; border-bottom: 14px solid #666; border-top: 0; margin-left: 8px; margin-bottom: 5px; }
.tick { height: 50.300px; display: flex; align-items: center; padding: 0 6px 0 6px; font-size: 39px; line-height: 50px; white-space: nowrap; }
.tick label { width: 120px; color: #666; font-size: 39px; letter-spacing: -0.900px; }
.tick span { width: 110px; text-align: right; letter-spacing: -1px; }
.tick svg { margin-left: 3px; margin-bottom: 5px; }
.tick b { flex: 1; text-align: right; letter-spacing: -0.600px; }
.promo { height: 60px; background: #fdefe8; margin-top: -2px; display: flex; padding-left: 43px; font-size: 37px; line-height: 62px; color: #e05a0c; }
.promo-x { width: 39px; height: 39px; background: #ebdcd5; border-radius: 0 0 0 24px; margin-left: auto; padding: 6px 0 0 12px; }

.danmu { height: 106px; padding: 28px 45px 0; display: flex; overflow: hidden; }
.round { width: 89px; height: 89px; border: 1.500px solid #d8dade; border-radius: 50%; background: #f6f7fa; flex-shrink: 0; display: flex; align-items: center; justify-content: center; }
.field { width: 864px; height: 89px; margin-left: 37px; border: 1.500px solid #d8dade; border-radius: 45px; background: #f6f7fa; overflow: hidden; display: flex; justify-content: space-between; padding-left: 36px; font-size: 41px; line-height: 91px; color: #999; flex-shrink: 0; }
.field em { letter-spacing: 3px; margin-left: 2px; }
.send { width: 106px; height: 89px; border-left: 1.500px solid #d8dade; background: #fff; display: flex; padding-left: 26px; color: #e2570f; }
.send b { font-weight: 900; font-size: 43px; line-height: 86px; }
.send svg { margin: 48px 0 0 -14px; }

.dock { height: 136px; background: #f6f7fa; border-top: 2px solid #d8dade; display: flex; color: #666; }
.sector { width: 275px; display: flex; flex-direction: column; align-items: flex-start; }
.sector i { border: 10px solid transparent; border-bottom: 7px solid #777; border-top: 0; margin: 8px 0 0 127px; }
.idx { font-size: 41px; line-height: 46px; margin-left: 55px; margin-top: 12px; }
.sector p { display: flex; align-items: center; font-size: 35px; line-height: 40px; margin-top: 7px; padding-left: 12px; white-space: nowrap; }
.pc { font-size: 33px; margin-left: 15px; }
.item { width: 201.300px; display: flex; flex-direction: column; align-items: center; padding-top: 7px; font-size: 34.500px; line-height: 46px; }
.item span { margin-top: 17px; white-space: nowrap; }
.sys { height: 126px; padding: 35px 0 0 272px; }
</style>
